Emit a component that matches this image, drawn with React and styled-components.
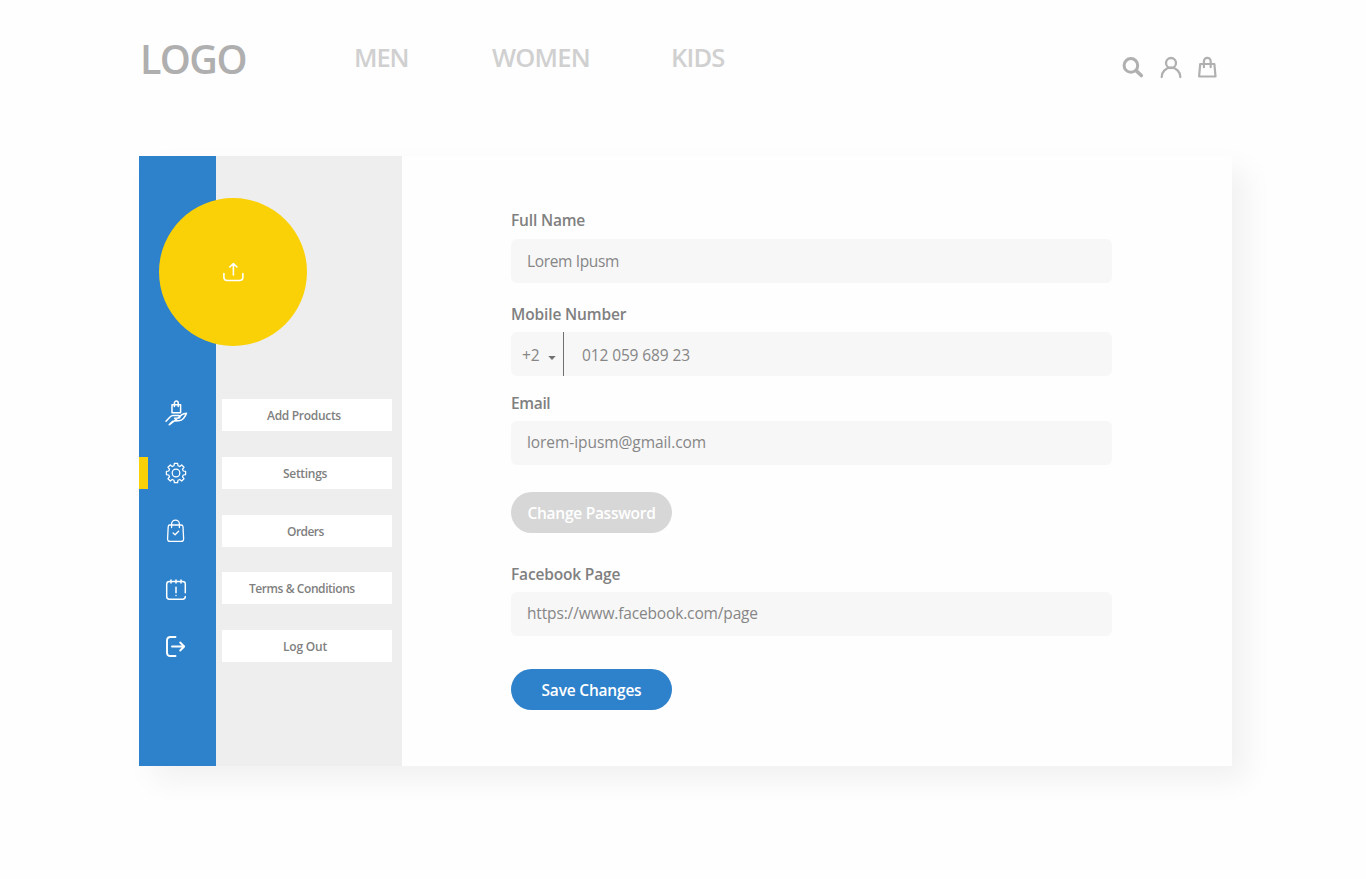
import React from "react";
import styled, { createGlobalStyle } from "styled-components";

const GlobalStyle = createGlobalStyle`
  * { box-sizing: border-box; }
  body {
    margin: 0;
    background: #fefefe;
    font-family: "Open Sans", "Noto Sans", sans-serif;
    color: #808080;
  }
`;

const Page = styled.div`
  width: 1366px;
  height: 879px;
  padding: 0 134px 0 139px;
  overflow: hidden;
`;

const Header = styled.header`
  display: grid;
  grid-template-columns: 214px 138px 179px 1fr auto;
  height: 156px;
  padding: 27px 15px 0 1px;
`;

const Logo = styled.div`
  padding-top: 2px;
  font-size: 39.5px;
  font-weight: 600;
  line-height: 60px;
  letter-spacing: -1.6px;
  color: #afafaf;
`;

const NavLink = styled.a`
  font-size: 25.5px;
  font-weight: 600;
  line-height: 60px;
  letter-spacing: ${(p) => p.$track || 0}px;
  color: #d0d0d0;
`;

const HeaderIcons = styled.div`
  display: flex;
  grid-column: 5;
  gap: 14px;
  padding-top: 28px;
  color: #b0b0b0;
`;

const Icon = styled.svg`
  display: block;
  flex: none;
  overflow: visible;
  fill: none;
  stroke: currentColor;
  stroke-width: ${(p) => p.$weight || 1.4};
  stroke-linecap: round;
  stroke-linejoin: round;
`;

const Card = styled.main`
  position: relative;
  display: flex;
  width: 1093px;
  height: 610px;
  background: #fefefe;
  box-shadow: 14px 14px 28px rgba(0, 0, 0, 0.055);
`;

const Sidebar = styled.aside`
  display: flex;
  flex-direction: column;
  gap: 25.75px;
  width: 263px;
  padding-top: 243px;
  background: linear-gradient(90deg, #2e81cb 77px, #eeeeee 77px);
`;

const Avatar = styled.button`
  position: absolute;
  top: 42px;
  left: 20px;
  display: flex;
  align-items: center;
  justify-content: center;
  width: 148px;
  height: 148px;
  padding: 0;
  border: 0;
  border-radius: 50%;
  background: #fad106;
  color: #fff;
`;

const MenuRow = styled.div`
  display: flex;
  height: 32px;
`;

const MenuIcon = styled.div`
  display: flex;
  align-items: center;
  width: 83px;
  padding-left: ${(p) => (p.$active ? 16 : 25)}px;
  border-left: ${(p) => (p.$active ? "9px solid #fad106" : "0")};
  color: #fff;
`;

const MenuLabel = styled.div`
  width: 170px;
  padding: 1px 0 0 ${(p) => p.$inset}px;
  background: #fff;
  font-size: 12px;
  font-weight: 600;
  line-height: 32px;
  letter-spacing: ${(p) => p.$track}px;
  white-space: nowrap;
`;

const Form = styled.form`
  display: flex;
  flex-direction: column;
  width: 710px;
  padding: 54px 0 0 109px;
`;

const Field = styled.div`
  display: flex;
  flex-direction: column;
  gap: ${(p) => p.$gap || 8}px;
  margin-bottom: ${(p) => p.$after}px;
`;

const Label = styled.label`
  height: 20px;
  font-size: 15.5px;
  font-weight: 600;
  line-height: 20px;
  letter-spacing: ${(p) => p.$track}px;
`;

const Control = styled.div`
  display: flex;
  height: 44px;
  border-radius: 6px;
  background: #f7f7f7;
  font-size: 15.5px;
  line-height: ${(p) => p.$line || 44}px;
  color: #868686;
`;

const Value = styled.span`
  padding-left: ${(p) => p.$inset || 16}px;
  letter-spacing: ${(p) => p.$track}px;
  font-weight: 400;
`;

const DialCode = styled.span`
  display: flex;
  align-items: center;
  justify-content: space-between;
  width: 53px;
  padding: 2px 7px 0 11px;
  border-right: 1px solid #707070;

  svg {
    margin-top: 5px;
  }
`;

const Pill = styled.button`
  width: 161px;
  height: 41px;
  margin: 0 0 ${(p) => p.$after || 0}px;
  padding: 1px 0 0;
  border: 0;
  border-radius: 21px;
  background: ${(p) => (p.$primary ? "#2e81cb" : "#d7d7d7")};
  color: #fff;
  font: 600 15.5px "Open Sans", sans-serif;
  letter-spacing: ${(p) => p.$track}px;
  white-space: nowrap;
`;

const HandBag = () => (
  <Icon width="24" height="34" viewBox="0 0 24 34" $weight={1.5}>
    <path d="M8 6.7h8.6v8H8zM10.4 8.5V5a1.9 1.9 0 0 1 3.8 0v3.5" />
    <path d="M2 23.2 6 19c.9-1 1.8-1.5 3.2-1.5h5.6c1.6 0 1.6 2.3 0 2.4l-4.2.3M15.6 18.6l2.4-1.9c1.2-.9 2.7-1.3 4.5-1.4-.6 1.9-1.7 3.6-3.1 5.3-1.3 1.6-2.7 2.2-4.6 2.2l-4.6.2c-1.1 0-1.8.4-2.6 1.2l-2.4 2.6z" />
  </Icon>
);

const Gear = () => (
  <Icon width="24" height="22" viewBox="-1 0 24 22" $weight={1.25}>
    <path d="M9 3.7 9.4 1.4h3.2l.4 2.3 1.8.8L16.7 3l2.3 2.3-1.5 1.9.8 1.8 2.3.4v3.2l-2.3.4-.8 1.8 1.5 1.9-2.3 2.3-1.9-1.5-1.8.8-.4 2.3H9.4L9 18.3l-1.8-.8L5.3 19 3 16.7l1.5-1.9-.8-1.8-2.3-.4V9.4L3.700 9l.8-1.8L3 5.300 5.300 3l1.900 1.500z" />
    <circle cx="11" cy="11" r="3.8" />
  </Icon>
);

const OrderBag = () => (
  <Icon width="24" height="24" viewBox="0.4 0 24 24" $weight={1.3}>
    <path d="M6 6h11.5c1.3 0 1.8.6 1.9 1.8l.6 11.8c.1 1.9-.7 2.8-2.5 2.8h-11c-1.8 0-2.6-.9-2.5-2.8l.6-11.8C4.7 6.6 5 6 6 6zM8 8.5V5a3.8 3.8 0 0 1 7.8 0v3.5M9.5 14l2 1.8 3.5-3.5" />
  </Icon>
);

const Notice = () => (
  <Icon width="24" height="24" viewBox="0 -1.7 24 24" $weight={1.5}>
    <path d="M21.3 15V6.5c0-2-.8-2.7-2.7-2.7H5.4c-1.9 0-2.7.7-2.7 2.7v12.3c0 1.9.8 2.7 2.7 2.7h13.2c1.9 0 2.7-.7 2.7-2.7M7 2.3v3M12 2.3v3M17 2.3v3M12 9.5V15M12 17.7v.2" />
  </Icon>
);

const Exit = () => (
  <Icon width="24" height="24" viewBox="0 -0.5 24 24" $weight={1.9}>
    <path d="M11.500 2.500H6.500c-2.200 0-3.500 1-3.500 3.500v12c0 2.500 1.300 3.500 3.500 3.500h5M8 12h12M16.200 8l4 4-4 4" />
  </Icon>
);

const MENU = [
  { label: "Add Products", inset: 45, track: -0.3, Glyph: HandBag },
  { label: "Settings", inset: 61, track: -0.3, Glyph: Gear, active: true },
  { label: "Orders", inset: 65, track: -0.55, Glyph: OrderBag },
  { label: "Terms & Conditions", inset: 27, track: -0.43, Glyph: Notice },
  { label: "Log Out", inset: 61, track: -0.2, Glyph: Exit },
];

export default function App() {
  return (
    <Page>
      <GlobalStyle />
      <Header>
        <Logo>LOGO</Logo>
        <NavLink $track={-1.1}>MEN</NavLink>
        <NavLink $track={-0.8}>WOMEN</NavLink>
        <NavLink $track={-0.8}>KIDS</NavLink>
        <HeaderIcons>
          <Icon width="24" height="24" viewBox="0 0 24 24" $weight={3}>
            <circle cx="9.9" cy="10.4" r="6.8" />
            <path d="m15.4 15.9 4.9 4.6" strokeWidth="3.6" />
          </Icon>
          <Icon width="24" height="24" viewBox="0 0 24 24" $weight={2.3}>
            <circle cx="12" cy="8" r="5" />
            <path d="M2.7 22a9.3 9.3 0 0 1 18.6 0" />
          </Icon>
          <Icon width="20" height="24" viewBox="0 0 20 24" $weight={2.2}>
            <path d="M3.2 9h14.2l1.1 12.5H2.1zM6.9 12.2V6.2a3.4 3.4 0 0 1 6.8 0v6" />
          </Icon>
        </HeaderIcons>
      </Header>
      <Card>
        <Sidebar>
          {MENU.map(({ label, inset, track, Glyph, active }) => (
            <MenuRow key={label}>
              <MenuIcon $active={active}>
                <Glyph />
              </MenuIcon>
              <MenuLabel $inset={inset} $track={track}>{label}</MenuLabel>
            </MenuRow>
          ))}
        </Sidebar>
        <Avatar type="button" aria-label="Upload">
          <Icon width="22" height="20" viewBox="0 0 22 20" $weight={1.6}>
            <path d="M1.9 11.5V15c0 2.4 1 3.5 3.4 3.5h12.2c2.4 0 3.4-1.1 3.4-3.5v-3.5M11.4 13V1.7M7.800 5l3.600-3.500L15 5" />
          </Icon>
        </Avatar>
        <Form>
          <Field $after={21} $gap={9}>
            <Label $track={-0.17}>Full Name</Label>
            <Control><Value $track={-0.35}>Lorem Ipusm</Value></Control>
          </Field>
          <Field $after={17}>
            <Label $track={-0.13}>Mobile Number</Label>
            <Control $line={46}>
              <DialCode>
                +2
                <svg width="8" height="4" viewBox="0 0 8 4"><path d="M0.3 0h7.4L4 4z" fill="#707070" /></svg>
              </DialCode>
              <Value $inset={18} $track={-0.12}>012 059 689 23</Value>
            </Control>
          </Field>
          <Field $after={27}>
            <Label $track={-0.35}>Email</Label>
            <Control $line={42}><Value $track={-0.07}>lorem-ipusm@gmail.com</Value></Control>
          </Field>
          <Pill type="button" $after={31} $track={-0.27}>Change Password</Pill>
          <Field $after={33}>
            <Label $track={-0.17}>Facebook Page</Label>
            <Control $line={42}><Value $track={-0.15}>https://www.facebook.com/page</Value></Control>
          </Field>
          <Pill type="button" $primary $track={-0.2}>Save Changes</Pill>
        </Form>
      </Card>
    </Page>
  );
}
